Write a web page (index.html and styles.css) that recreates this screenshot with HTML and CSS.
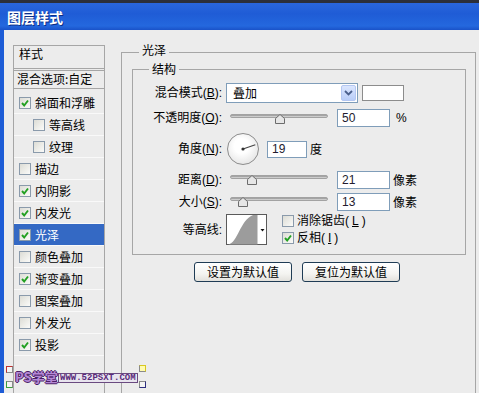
FILE: index.html
```html
<!DOCTYPE html>
<html lang="zh">
<head>
<meta charset="utf-8">
<title>图层样式</title>
<link rel="stylesheet" href="styles.css">
</head>
<body>
<div class="win">
  <div class="titlebar"><span class="title">图层样式</span></div>
  <div class="main">
    <div class="side">
      <div class="side-head">样式</div>
      <div class="side-blend">混合选项:自定</div>
      <div class="items">
        <div class="item"><span class="cb"><svg viewBox="0 0 10 10"><path d="M2 5 L4.2 7.5 L8 2.5"/></svg></span>斜面和浮雕</div>
        <div class="item sub"><span class="cb"></span>等高线</div>
        <div class="item sub"><span class="cb"></span>纹理</div>
        <div class="item"><span class="cb"></span>描边</div>
        <div class="item"><span class="cb"><svg viewBox="0 0 10 10"><path d="M2 5 L4.2 7.5 L8 2.5"/></svg></span>内阴影</div>
        <div class="item"><span class="cb"><svg viewBox="0 0 10 10"><path d="M2 5 L4.2 7.5 L8 2.5"/></svg></span>内发光</div>
        <div class="item sel"><span class="cb"><svg viewBox="0 0 10 10"><path d="M2 5 L4.2 7.5 L8 2.5"/></svg></span>光泽</div>
        <div class="item"><span class="cb"></span>颜色叠加</div>
        <div class="item"><span class="cb"><svg viewBox="0 0 10 10"><path d="M2 5 L4.2 7.5 L8 2.5"/></svg></span>渐变叠加</div>
        <div class="item"><span class="cb"></span>图案叠加</div>
        <div class="item"><span class="cb"></span>外发光</div>
        <div class="item"><span class="cb"><svg viewBox="0 0 10 10"><path d="M2 5 L4.2 7.5 L8 2.5"/></svg></span>投影</div>
      </div>
    </div>

    <div class="outer">
      <div class="gtitle outer-title">光泽</div>
      <div class="inner">
        <div class="gtitle inner-title">结构</div>
        <div class="rows">
          <div class="row r-blend">
            <div class="label">混合模式(<u>B</u>):</div>
            <div class="select">
              <span class="select-text">叠加</span>
              <span class="select-btn"><svg viewBox="0 0 9 6" width="9" height="6"><path d="M1 1 L4.5 4.5 L8 1" fill="none" stroke="#4a5f8c" stroke-width="1.8"/></svg></span>
            </div>
            <div class="swatch"></div>
          </div>

          <div class="row r-op">
            <div class="label">不透明度(<u>O</u>):</div>
            <div class="slider"><div class="track"></div><svg class="thumb" style="left:45px" viewBox="0 0 10 10" width="10" height="10"><path d="M0.5 4.5 L5 0.5 L9.5 4.5 L9.5 9.5 L0.5 9.5 Z"/></svg></div>
            <div class="num wide">50</div>
            <div class="unit pct">%</div>
          </div>

          <div class="row r-angle">
            <div class="label">角度(<u>N</u>):</div>
            <div class="dial"><svg viewBox="0 0 32 32" width="32" height="32"><line x1="16" y1="16" x2="28.3" y2="11.8" stroke="#444" stroke-width="1.2"/><circle cx="16" cy="16" r="1.6" fill="#333"/></svg></div>
            <div class="num short">19</div>
            <div class="unit">度</div>
          </div>

          <div class="row r-dist">
            <div class="label">距离(<u>D</u>):</div>
            <div class="slider"><div class="track"></div><svg class="thumb" style="left:17px" viewBox="0 0 10 10" width="10" height="10"><path d="M0.5 4.5 L5 0.5 L9.5 4.5 L9.5 9.5 L0.5 9.5 Z"/></svg></div>
            <div class="num wide">21</div>
            <div class="unit">像素</div>
          </div>

          <div class="row r-size">
            <div class="label">大小(<u>S</u>):</div>
            <div class="slider"><div class="track"></div><svg class="thumb" style="left:8px" viewBox="0 0 10 10" width="10" height="10"><path d="M0.5 4.5 L5 0.5 L9.5 4.5 L9.5 9.5 L0.5 9.5 Z"/></svg></div>
            <div class="num wide">13</div>
            <div class="unit">像素</div>
          </div>

          <div class="row r-contour">
            <div class="label">等高线:</div>
            <div class="contour"><svg viewBox="0 0 41 31" width="41" height="31">
              <rect x="0.5" y="0.5" width="40" height="30" fill="#fff" stroke="#5a5a5a"/>
              <path d="M2 30.5 C 12 29 14 6 27 1 L 31.5 1 L 31.5 30.5 Z" fill="#9c9c9c"/>
              <path d="M34.5 15 L38.5 15 L36.5 17.5 Z" fill="#111"/>
            </svg></div>
            <div class="checks">
              <div class="chk"><span class="cb"></span>消除锯齿(<u>L</u>)</div>
              <div class="chk"><span class="cb"><svg viewBox="0 0 10 10"><path d="M2 5 L4.2 7.5 L8 2.5"/></svg></span>反相(<u>I</u>)</div>
            </div>
          </div>
        </div>
      </div>
      <div class="buttons">
        <div class="btn">设置为默认值</div>
        <div class="btn">复位为默认值</div>
      </div>
    </div>
  </div>

  <div class="watermark">
    <span class="corner c-tl"></span>
    <span class="corner c-bl"></span>
    <span class="corner c-tr"></span>
    <span class="corner c-br"></span>
    <span class="wm-ps">PS学堂</span>
    <span class="wm-url">WWW.52PSXT.COM</span>
  </div>
</div>
</body>
</html>
```

FILE: styles.css
```css
* { box-sizing: border-box; }

html, body {
  margin: 0;
  padding: 0;
}

body {
  width: 479px;
  height: 393px;
  overflow: hidden;
  background: #ececec;
  font-family: "Liberation Sans", "Noto Sans CJK SC", sans-serif;
  font-size: 12px;
  color: #000;
}

.win {
  position: relative;
  width: 479px;
  height: 393px;
  overflow: hidden;
}

.titlebar {
  height: 30px;
  border-top: 3px solid #2c2f3a;
  background: linear-gradient(#2a66dc, #1f5cd6 40%, #2468de 85%, #1a52c8);
  padding: 2px 0 0 7px;
}

.title {
  font-family: "Noto Sans CJK SC", sans-serif;
  font-weight: bold;
  font-size: 14px;
  line-height: 24px;
  color: #fff;
  text-shadow: 1px 1px 0 #0c2f86;
}

.main {
  display: flex;
  height: 363px;
  border-left: 4px solid #1d5cd6;
  overflow: hidden;
}

/* left list */
.side {
  flex: none;
  width: 92px;
  height: 400px;
  margin: 15px 0 0 9px;
  border: 1px solid #a6a6a6;
  border-bottom: none;
  font-family: "Noto Sans CJK SC", sans-serif;
}

.side-head {
  height: 25px;
  padding: 1px 0 0 5px;
  line-height: 14px;
  border-bottom: 3px double #a6a6a6;
}

.side-blend {
  height: 18px;
  padding: 1px 0 0 3px;
  line-height: 14px;
  border-bottom: 1px solid #a6a6a6;
}

.items {
  margin-top: 3px;
}

.item {
  height: 22px;
  display: flex;
  align-items: center;
  gap: 4px;
  padding-left: 5px;
  border-bottom: 1px solid #f9f9f9;
  line-height: 14px;
}

.item.sub {
  padding-left: 19px;
}

.item.sel {
  background: #3469c4;
  color: #fff;
}

.cb {
  flex: none;
  width: 12px;
  height: 12px;
  border: 1px solid #8a9aab;
  background: linear-gradient(135deg, #dcdcd5, #fbfbf9);
  display: flex;
  align-items: center;
  justify-content: center;
}

.cb svg {
  width: 10px;
  height: 10px;
}

.cb svg path {
  fill: none;
  stroke: #22a022;
  stroke-width: 1.9;
}

/* right panel */
.outer {
  flex: none;
  width: 355px;
  height: 400px;
  margin: 22px 0 0 16px;
  border: 1px solid #a6a6a6;
  border-bottom: none;
}

.gtitle {
  width: fit-content;
  height: 14px;
  line-height: 14px;
  padding: 0 3px;
  background: #ececec;
  font-family: "Noto Sans CJK SC", sans-serif;
}

.outer-title {
  margin: -10px 0 0 17px;
}

.inner {
  width: 334px;
  margin: 12px 0 0 10px;
  border: 1px solid #a6a6a6;
  padding-bottom: 9px;
}

.inner-title {
  margin: -8px 0 0 16px;
}

.rows {
  margin-top: 7px;
}

.row {
  display: flex;
  align-items: center;
}

.label {
  flex: none;
  width: 89px;
  text-align: right;
  line-height: 14px;
  white-space: nowrap;
}

.r-blend { height: 20px; }
.r-op { height: 18px; margin-top: 6px; }
.r-angle { height: 32px; margin-top: 6px; }
.r-dist { height: 18px; margin-top: 6px; }
.r-size { height: 18px; margin-top: 4px; }
.r-contour { height: 31px; margin-top: 3px; }

.select {
  flex: none;
  width: 132px;
  height: 20px;
  margin-left: 4px;
  border: 1px solid #7f9db9;
  background: #fff;
  display: flex;
  align-items: center;
}

.select-text {
  flex: 1;
  padding-left: 6px;
  font-family: "Noto Sans CJK SC", sans-serif;
  line-height: 14px;
}

.select-btn {
  flex: none;
  width: 15px;
  height: 16px;
  margin-right: 1px;
  border: 1px solid #b4c7f2;
  border-radius: 2px;
  background: linear-gradient(#dbe6fe, #b9cdf8);
  display: flex;
  align-items: center;
  justify-content: center;
}

.swatch {
  flex: none;
  width: 42px;
  height: 16px;
  margin-left: 4px;
  border: 1px solid #8c8c8c;
  background: #fff;
}

.slider {
  position: relative;
  flex: none;
  align-self: flex-start;
  width: 98px;
  height: 10px;
  margin: 4px 0 0 8px;
}

.r-op .slider {
  margin-top: 5px;
}

.track {
  height: 4px;
  border-radius: 2px;
  background: linear-gradient(#8e8e8e, #c4c4c4 60%, #dadada);
  border: 1px solid #a2a2a2;
}

.thumb {
  position: absolute;
  top: 0;
}

.thumb path {
  fill: #e6e6e6;
  stroke: #6c6c6c;
  stroke-width: 1;
}

.num {
  flex: none;
  height: 18px;
  border: 1px solid #7f9db9;
  background: #fff;
  padding-left: 4px;
  display: flex;
  align-items: center;
  color: #231b2e;
  font-size: 12px;
}

.num.wide {
  width: 53px;
  margin-left: 9px;
}

.num.short {
  width: 40px;
  height: 17px;
  margin-left: 8px;
}

.unit {
  margin-left: 3px;
  font-family: "Noto Sans CJK SC", sans-serif;
  line-height: 14px;
}

.unit.pct {
  margin-left: 6px;
  font-family: "Liberation Sans", sans-serif;
}

.dial {
  flex: none;
  width: 32px;
  height: 32px;
  margin-left: 5px;
  border-radius: 50%;
  border: 1px solid #8c8c8c;
  background: radial-gradient(circle at 45% 40%, #ffffff 30%, #e4e4e4 80%, #d2d2d2);
}

.dial svg {
  display: block;
  margin: -1px 0 0 -1px;
}

.contour {
  flex: none;
  width: 41px;
  height: 31px;
  margin-left: 4px;
}

.contour svg {
  display: block;
}

.checks {
  margin-left: 15px;
  display: flex;
  flex-direction: column;
  gap: 3px;
}

.chk {
  height: 14px;
  display: flex;
  align-items: center;
  gap: 3px;
  line-height: 14px;
  white-space: nowrap;
}

.buttons {
  display: flex;
  gap: 10px;
  margin: 7px 0 0 72px;
}

.btn {
  width: 98px;
  height: 20px;
  border: 1px solid #1f3c55;
  border-radius: 3px;
  background: linear-gradient(#ffffff, #f4f4f1 60%, #e2e1dc);
  display: flex;
  align-items: center;
  justify-content: center;
  font-family: "Noto Sans CJK SC", sans-serif;
  line-height: 14px;
}

/* watermark overlay */
.watermark {
  position: absolute;
  left: 5px;
  top: 365px;
  width: 142px;
  height: 24px;
}

.corner {
  position: absolute;
  width: 7px;
  height: 7px;
  border: 1px solid #8a8a8a;
  background: #f4f4f4;
}

.c-tl { left: 1px; top: 1px; border-top-color: #c03030; border-left-color: #c03030; }
.c-bl { left: 1px; top: 16px; border-bottom-color: #3aa03a; border-left-color: #3aa03a; }
.c-tr { left: 134px; top: 0; border-top-color: #d8c820; border-right-color: #d8c820; background: #fffbb0; }
.c-br { left: 134px; top: 16px; border-bottom-color: #303080; border-right-color: #303080; }

.wm-ps {
  position: absolute;
  left: 10px;
  top: 4px;
  font-family: "Noto Sans CJK SC", sans-serif;
  font-weight: bold;
  font-size: 13px;
  line-height: 15px;
  color: #b488d4;
  text-shadow: 1px 0 0 #4a1f66, -1px 0 0 #4a1f66, 0 1px 0 #4a1f66, 0 -1px 0 #4a1f66;
}

.wm-url {
  position: absolute;
  left: 53px;
  top: 8px;
  height: 10px;
  padding: 0 1px;
  border: 1px solid #6a4a80;
  background: #e8e4ee;
  font-family: "Liberation Mono", monospace;
  font-weight: bold;
  font-size: 9px;
  line-height: 8px;
  color: #5a2a7a;
}
```
